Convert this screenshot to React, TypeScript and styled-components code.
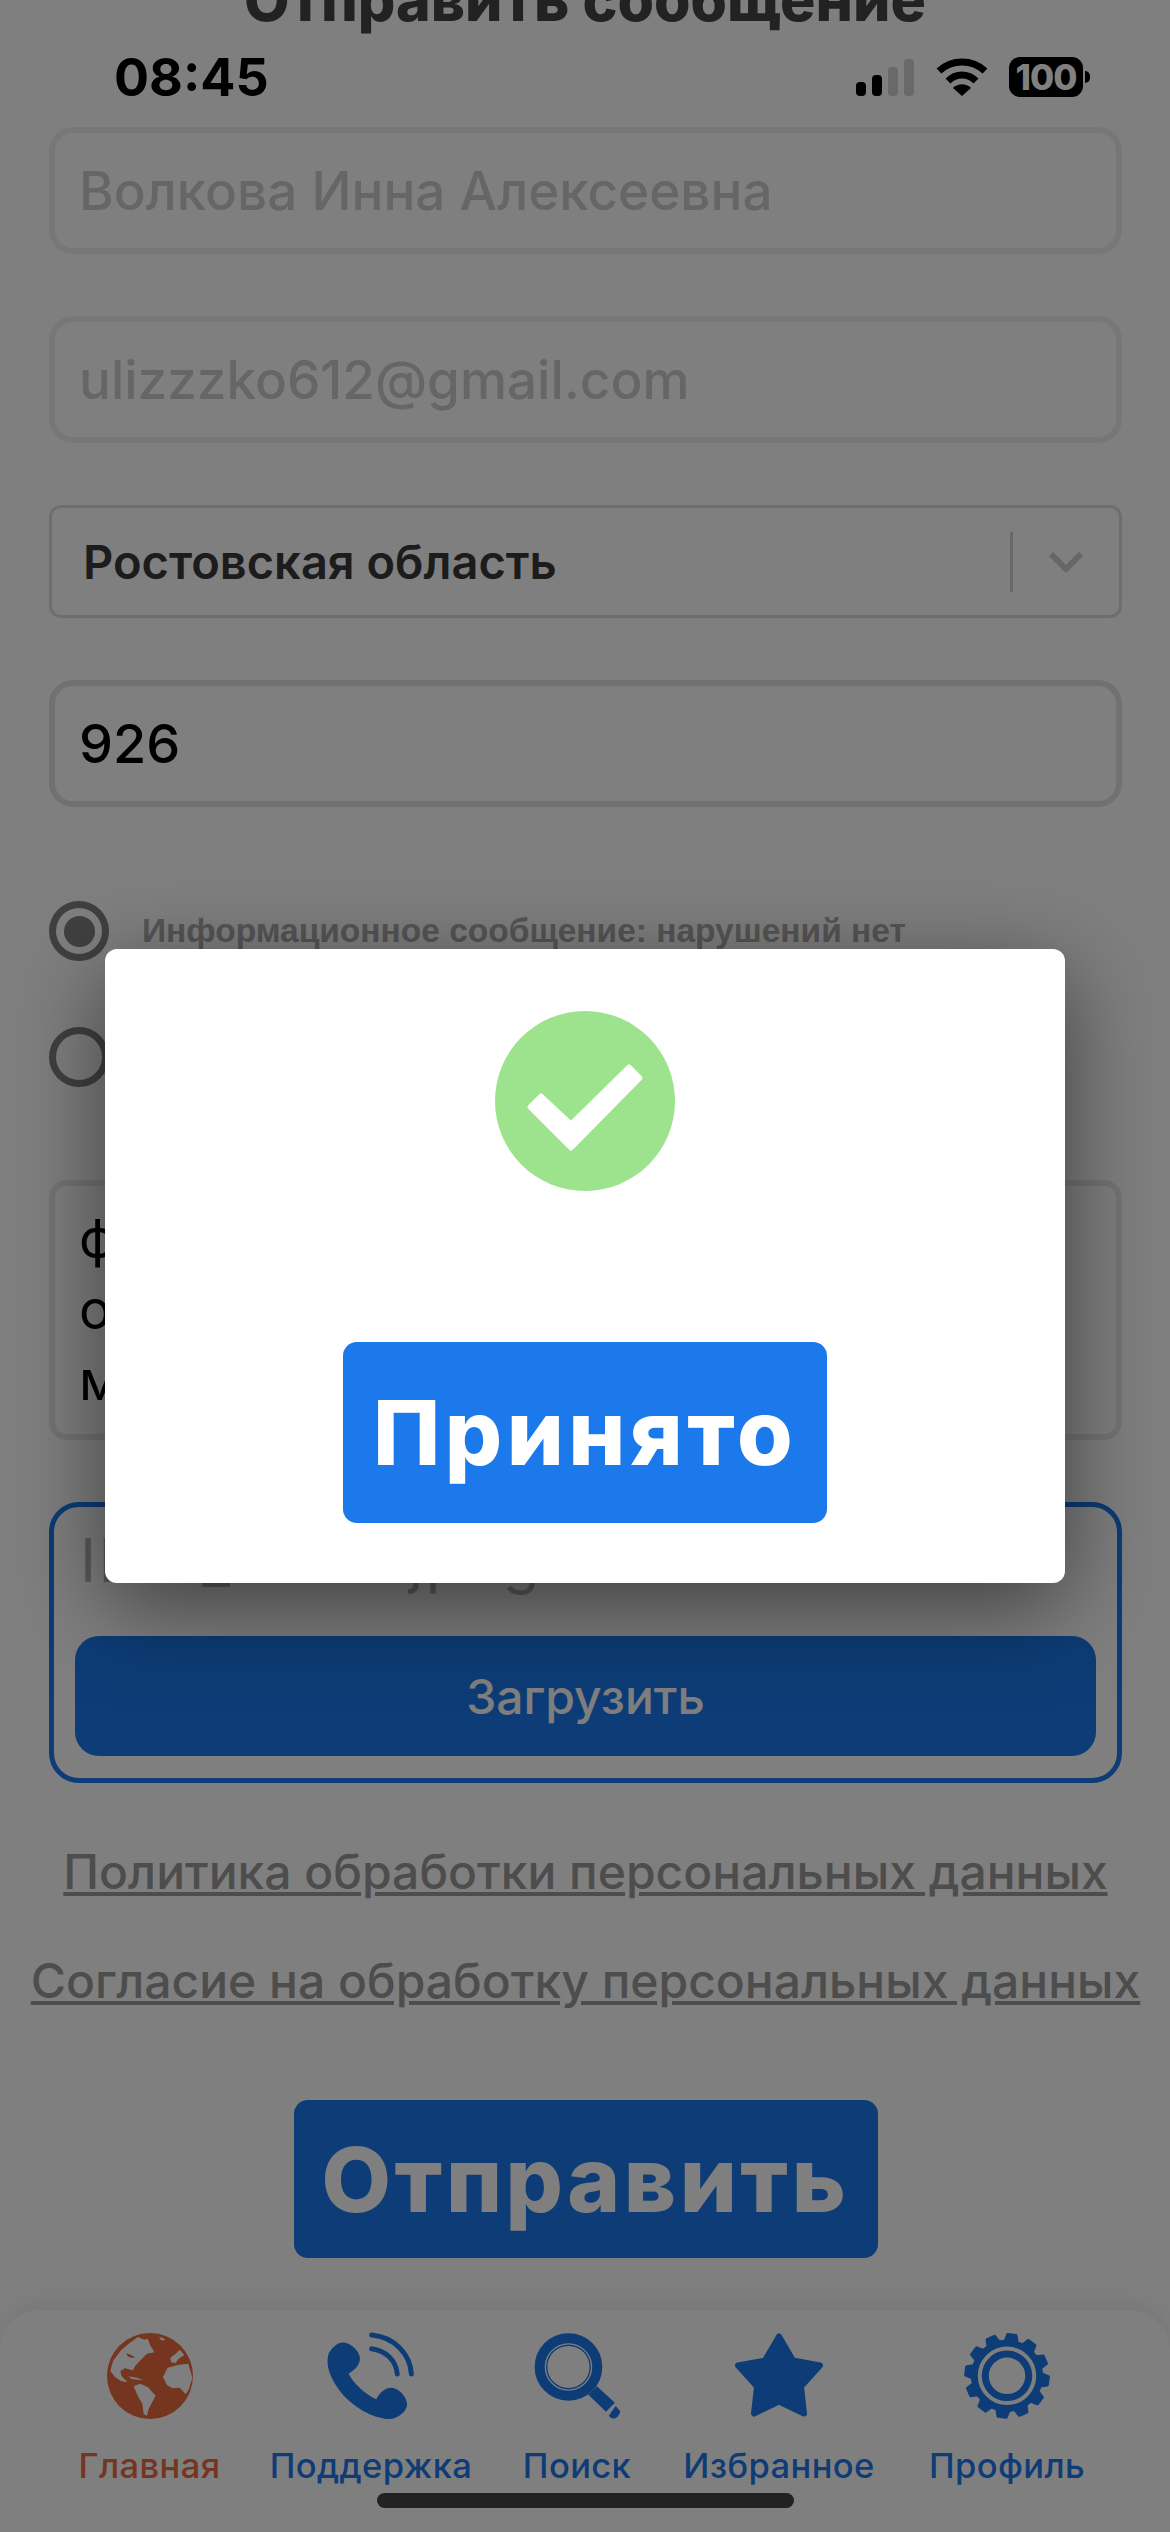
import React from "react";
import styled, { createGlobalStyle } from "styled-components";

const GlobalStyle = createGlobalStyle`
	* {
		box-sizing: border-box;
	}
	html,
	body {
		margin: 0;
		padding: 0;
		background: #fff;
	}
`;

const Page = styled.div`
	position: relative;
	width: 1170px;
	height: 2532px;
	overflow: hidden;
	display: flex;
	flex-direction: column;
	background: #fff;
	font-family: "Inter", "Liberation Sans", sans-serif;
`;

const Title = styled.h1`
	margin: -32px 0 0;
	height: 64px;
	line-height: 64px;
	text-align: center;
	font-size: 59px;
	font-weight: 800;
	color: #444;
	white-space: nowrap;
`;

const Form = styled.div`
	display: flex;
	flex-direction: column;
	gap: 62px;
	margin-top: 95px;
	padding: 0 48px 0 49px;
`;

const Field = styled.div<{ $filled?: boolean }>`
	height: 127px;
	display: flex;
	align-items: center;
	padding: 0 24px;
	border: 6px solid ${(p) => (p.$filled ? "#e2e2e2" : "#eeeeee")};
	border-radius: 24px;
	font-size: ${(p) => (p.$filled ? 54 : 53)}px;
	font-weight: 500;
	color: ${(p) => (p.$filled ? "#000" : "#ccc")};
`;

const Select = styled.div`
	height: 113px;
	display: flex;
	align-items: center;
	padding: 0 36px 0 31px;
	border: 3px solid #dcdcdc;
	border-radius: 12px;
	font-size: 47px;
	font-weight: 560;
	color: #383838;
`;

const SelectValue = styled.span`
	flex: 1;
`;

const SelectDivider = styled.span`
	width: 3px;
	height: 60px;
	margin-right: 36px;
	background: #d0d0d0;
`;

const RadioGroup = styled.div`
	display: flex;
	flex-direction: column;
	gap: 66px;
	margin: 32px 0 31px;
`;

const RadioRow = styled.div`
	display: flex;
	align-items: center;
	gap: 33px;
`;

const RadioCircle = styled.span<{ $checked?: boolean }>`
	width: 60px;
	height: 60px;
	flex: none;
	display: flex;
	align-items: center;
	justify-content: center;
	border: 7px solid #808080;
	border-radius: 50%;

	&::after {
		content: "";
		display: ${(p) => (p.$checked ? "block" : "none")};
		width: 31px;
		height: 31px;
		border-radius: 50%;
		background: #808080;
	}
`;

const RadioLabel = styled.span`
	font-family: "Liberation Sans", sans-serif;
	font-size: 33.5px;
	font-weight: 700;
	color: #aaa;
`;

const TextBox = styled.div`
	height: 260px;
	padding: 17px 24px;
	border: 6px solid #e8e8e8;
	border-radius: 18px;
	font-size: 54px;
	line-height: 71px;
	color: #000;
`;

const UploadBox = styled.div`
	height: 281px;
	display: flex;
	flex-direction: column;
	padding: 21px;
	border: 5px solid #1b79ec;
	border-radius: 30px;
`;

const FileName = styled.div`
	height: 108px;
	padding-left: 5px;
	font-size: 60px;
	line-height: 64px;
	letter-spacing: 2.5px;
	font-weight: 400;
	color: #b4b4b4;
	white-space: nowrap;
`;

const UploadButton = styled.div`
	height: 120px;
	display: flex;
	align-items: center;
	justify-content: center;
	border-radius: 24px;
	background: #1b79ec;
	color: #fff;
	font-size: 48px;
	font-weight: 500;
`;

const LinkList = styled.div`
	display: flex;
	flex-direction: column;
	align-items: center;
	gap: 52px;
	margin: -2px -49px 0;
`;

const PolicyLink = styled.a`
	font-size: 48px;
	line-height: 57px;
	font-weight: 500;
	color: #9a9a9a;
	text-decoration: underline;
	white-space: nowrap;
`;

const SendButton = styled.div`
	align-self: center;
	width: 584px;
	height: 158px;
	margin-top: 29px;
	display: flex;
	align-items: center;
	justify-content: center;
	border-radius: 14px;
	background: #1b79ec;
	color: #fff;
	font-size: 90px;
	font-weight: 800;
	letter-spacing: 3.5px;
`;

const BottomNav = styled.nav`
	margin-top: auto;
	height: 222px;
	display: grid;
	grid-template-columns: 221px 222px 190px 214px 242px;
	padding: 22px 0 0 39px;
	border-radius: 40px 40px 0 0;
	background: #fff;
	box-shadow: 0 -8px 24px rgba(0, 0, 0, 0.07);
`;

const NavItem = styled.div<{ $active?: boolean }>`
	display: flex;
	flex-direction: column;
	align-items: center;
	gap: 26px;
	color: ${(p) => (p.$active ? "#ea6a3e" : "#1b79ec")};
	font-size: 34.5px;
	letter-spacing: 0.4px;
	line-height: 40px;
	font-weight: 500;
	white-space: nowrap;

	svg {
		display: block;
		height: 88px;
	}
`;

const Overlay = styled.div`
	position: absolute;
	inset: 0;
	display: flex;
	align-items: center;
	justify-content: center;
	background: rgba(0, 0, 0, 0.5);
`;

const Modal = styled.div`
	width: 960px;
	height: 634px;
	display: flex;
	flex-direction: column;
	align-items: center;
	padding-top: 62px;
	border-radius: 12px;
	background: #fff;
	box-shadow: 0 24px 90px rgba(0, 0, 0, 0.5);
`;

const AcceptButton = styled.div`
	width: 484px;
	height: 181px;
	margin-top: 151px;
	display: flex;
	align-items: center;
	justify-content: center;
	border-radius: 14px;
	background: #1b79ec;
	color: #fff;
	font-size: 90px;
	font-weight: 800;
	letter-spacing: 4.5px;
`;

const StatusBar = styled.div`
	position: absolute;
	top: 57px;
	left: 0;
	right: 0;
	height: 40px;
	display: flex;
	align-items: center;
	padding: 0 87px 0 114px;
	color: #000;
`;

const Clock = styled.span`
	flex: 1;
	padding-top: 2px;
	font-size: 52px;
	font-weight: 700;
	line-height: 40px;
`;

const Battery = styled.span`
	position: relative;
	width: 74px;
	height: 40px;
	margin-left: 21px;
	display: flex;
	align-items: center;
	justify-content: center;
	border-radius: 11px;
	background: #000;
	color: #808080;
	font-size: 35px;
	font-weight: 800;
	letter-spacing: -1px;

	&::after {
		content: "";
		position: absolute;
		top: 14px;
		right: -7px;
		width: 5px;
		height: 12px;
		border-radius: 0 6px 6px 0;
		background: #000;
	}
`;

const HomeIndicator = styled.div`
	position: absolute;
	left: 377px;
	bottom: 24px;
	width: 417px;
	height: 15px;
	border-radius: 8px;
	background: #222;
`;

const GlobeIcon = () => (
	<svg width="86" viewBox="50 38 258 258">
		<circle cx="179" cy="167" r="129" fill="#ea6a3e" />
		<g fill="#fff">
			<path d="M68 122 L92 90 L118 68 L143 50 L162 58 L172 55 L178 72 L192 96 L170 100 L158 112 L146 124 L134 138 L128 150 L104 144 L90 152 L94 168 L112 186 L92 182 L74 170 L60 152 Z" />
			<path d="M206 50 L220 54 L224 60 L212 60 Z" />
			<path d="M114 168 L140 172 L160 180 L142 178 L124 176 Z" />
			<path d="M130 198 L150 190 L172 200 L196 226 L184 248 L174 268 L170 286 L160 282 L156 250 L142 226 Z" />
			<path d="M218 170 L232 142 L262 134 L294 130 L306 172 L296 206 L286 222 L268 202 L246 204 L230 194 Z" />
			<path d="M240 112 L256 100 L268 88 L282 104 L264 116 L256 128 L242 126 Z" />
		</g>
		<path fill="#ea6a3e" d="M108 98 L122 104 L136 112 L122 112 L112 108 Z" />
	</svg>
);

const PhoneIcon = () => (
	<svg width="90" viewBox="20 35 272 268">
		<path
			fill="#1b79ec"
			d="M27 100 C40 78 60 62 78 68 C95 72 118 90 122 112 C125 132 108 150 88 162 C105 195 140 225 172 240 C180 222 200 202 222 205 C245 210 265 235 266 255 C266 275 240 298 215 300 C170 300 110 270 70 225 C40 190 20 150 24 115 Z"
		/>
		<path
			fill="none"
			stroke="#1b79ec"
			strokeWidth="15"
			strokeLinecap="round"
			d="M158 44 C225 50 275 100 279 163 M158 86 C200 92 232 120 236 163"
		/>
	</svg>
);

const SearchIcon = () => (
	<svg width="87" viewBox="638 35 260 260">
		<circle cx="741" cy="138" r="86" fill="none" stroke="#1b79ec" strokeWidth="30" />
		<circle cx="741" cy="138" r="65" fill="none" stroke="#1b79ec" strokeWidth="4" />
		<path fill="#1b79ec" d="M826 196 L880 245 L853 272 L800 220 Z" />
		<path fill="#1b79ec" d="M882 255 L896 270 C894 282 884 292 876 292 C870 292 864 288 862 283 Z" />
	</svg>
);

const StarIcon = () => (
	<svg width="88" viewBox="0 0 88 85">
		<path
			fill="#1b79ec"
			stroke="#1b79ec"
			strokeWidth="6"
			strokeLinejoin="round"
			d="M44 3 L58 27 L85 32 L66 53 L69 80 L44 68 L19 80 L22 53 L3 32 L30 27 Z"
		/>
	</svg>
);

// gear outline, built from the tooth count
const gearPoints = (() => {
	const teeth = 12;
	const cx = 175;
	const cy = 167;
	const points: string[] = [];
	for (let i = 0; i < teeth; i++) {
		const base = (i / teeth) * Math.PI * 2 - Math.PI / 2 + 0.12;
		const step = (Math.PI * 2) / teeth;
		const ring: [number, number][] = [
			[-0.3, 104],
			[-0.17, 124],
			[0.17, 124],
			[0.3, 104],
		];
		ring.forEach(([a, r]) => {
			const angle = base + a * step * 1.1;
			points.push(`${(cx + Math.cos(angle) * r).toFixed(1)},${(cy + Math.sin(angle) * r).toFixed(1)}`);
		});
	}
	return points.join(" ");
})();

const GearIcon = () => (
	<svg width="90" viewBox="40 35 270 265">
		<polygon points={gearPoints} fill="#1b79ec" stroke="#1b79ec" strokeWidth="10" strokeLinejoin="round" />
		<circle cx="175" cy="167" r="82" fill="none" stroke="#fff" strokeWidth="12" />
		<circle cx="175" cy="167" r="55" fill="#fff" />
	</svg>
);

const SignalIcon = () => (
	<svg width="58" height="40" viewBox="0 0 58 40">
		<rect x="0" y="25" width="10" height="14" rx="4" fill="#000" />
		<rect x="16" y="18" width="10" height="21" rx="4" fill="#000" />
		<rect x="32" y="10" width="10" height="29" rx="4" fill="#696969" />
		<rect x="48" y="2" width="10" height="37" rx="4" fill="#696969" />
	</svg>
);

const WifiIcon = () => (
	<svg width="52" height="40" viewBox="0 0 52 40" style={{ marginLeft: 22 }}>
		<path
			fill="none"
			stroke="#000"
			strokeWidth="7"
			d="M3 14 C16 2 36 2 49 14 M12 24 C20 16 32 16 40 24"
		/>
		<path fill="#000" d="M17 31 C22 26 30 26 35 31 L26 39 Z" />
	</svg>
);

const CheckIcon = () => (
	<svg width="180" height="180" viewBox="0 0 180 180">
		<circle cx="90" cy="90" r="90" fill="#9de38d" />
		<polygon
			points="46,85 35,96 76,137 145,67 134,56 76,113"
			fill="#fff"
			stroke="#fff"
			strokeWidth="5"
			strokeLinejoin="round"
		/>
	</svg>
);

function App() {
	return (
		<Page>
			<GlobalStyle />
			<Title>Отправить сообщение</Title>
			<Form>
				<Field>Волкова Инна Алексеевна</Field>
				<Field>ulizzzko612@gmail.com</Field>
				<Select>
					<SelectValue>Ростовская область</SelectValue>
					<SelectDivider />
					<svg width="34" height="20" viewBox="0 0 34 20">
						<path d="M2 2 L17 17 L32 2" fill="none" stroke="#ccc" strokeWidth="6" />
					</svg>
				</Select>
				<Field $filled>926</Field>
				<RadioGroup>
					<RadioRow>
						<RadioCircle $checked />
						<RadioLabel>Информационное сообщение: нарушений нет</RadioLabel>
					</RadioRow>
					<RadioRow>
						<RadioCircle />
					</RadioRow>
				</RadioGroup>
				<TextBox>
					ф
					<br />о
					<br />м
				</TextBox>
				<UploadBox>
					<FileName>IMG_0008.jpeg</FileName>
					<UploadButton>Загрузить</UploadButton>
				</UploadBox>
				<LinkList>
					<PolicyLink>Политика обработки персональных данных</PolicyLink>
					<PolicyLink>Согласие на обработку персональных данных</PolicyLink>
				</LinkList>
				<SendButton>Отправить</SendButton>
			</Form>
			<BottomNav>
				<NavItem $active>
					<GlobeIcon />
					Главная
				</NavItem>
				<NavItem>
					<PhoneIcon />
					Поддержка
				</NavItem>
				<NavItem>
					<SearchIcon />
					Поиск
				</NavItem>
				<NavItem>
					<StarIcon />
					Избранное
				</NavItem>
				<NavItem>
					<GearIcon />
					Профиль
				</NavItem>
			</BottomNav>
			<Overlay>
				<Modal>
					<CheckIcon />
					<AcceptButton>Принято</AcceptButton>
				</Modal>
			</Overlay>
			<StatusBar>
				<Clock>08:45</Clock>
				<SignalIcon />
				<WifiIcon />
				<Battery>100</Battery>
			</StatusBar>
			<HomeIndicator />
		</Page>
	);
}

export default App;
